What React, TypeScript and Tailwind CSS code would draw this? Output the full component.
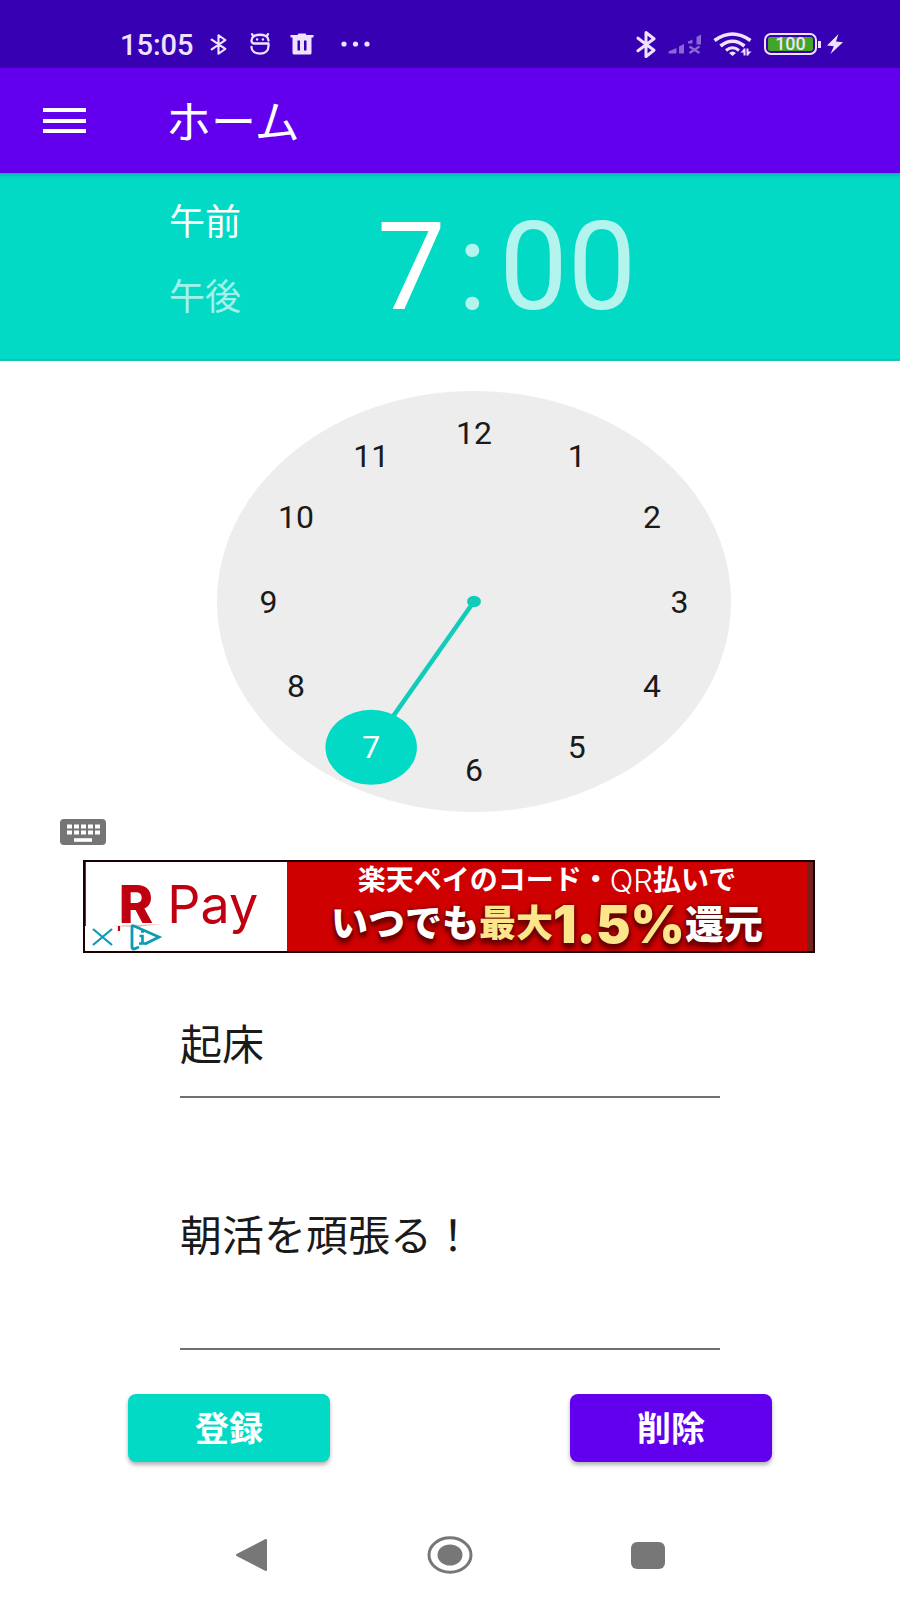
import { useState } from "react";

const HOURS = [12, 1, 2, 3, 4, 5, 6, 7, 8, 9, 10, 11];

// Place of an hour on the dial, in percent of the dial's box.
function place(hour: number) {
  const angle = (hour * Math.PI) / 6;
  return { x: 50 + 40 * Math.sin(angle), y: 50 - 40 * Math.cos(angle) };
}

function BluetoothIcon({ className, stroke }: { className: string; stroke: number }) {
  return (
    <svg className={className} viewBox="0 0 20 26" preserveAspectRatio="none" fill="none" stroke="currentColor" strokeWidth={stroke} strokeLinejoin="round" strokeLinecap="round" aria-hidden="true">
      <path d="M2 7 L18 18.5 L10 24.5 V1.5 L18 7.5 L2 19" />
    </svg>
  );
}

function StatusBar() {
  return (
    <div className="flex h-[68px] items-center justify-between bg-[#3700b3] pt-[20px] pr-[57px] pl-[120px] text-[#eee2ff]">
      <div className="flex items-center">
        <span className="w-[90px] pt-[2px] text-[29px] leading-[28px] font-medium">15:05</span>
        <BluetoothIcon className="h-[21px] w-[17px]" stroke={2.5} />
        <svg className="ml-[23px] h-[22px] w-[20px]" viewBox="0 0 20 22" fill="none" stroke="currentColor" strokeWidth="2.300" strokeLinecap="round" strokeLinejoin="round" aria-hidden="true">
          <path d="M18.500 7.500 C18.500 5.500 17.500 4 16 3 Q10 0.500 4 3 C2.500 4 1.500 5.500 1.500 7.500 Q1.500 10.500 4.500 10.500 H18.500 V13 C18.500 18 15 20.600 10 20.600 C5 20.600 1.500 18 1.500 14" />
          <path d="M3.500 3.500 L2 1.200 M16.500 3.500 L18 1.200" />
          <path d="M7 6.500 H7.200 M12.800 6.500 H13" />
        </svg>
        <svg className="ml-[20px] h-[22px] w-[24px]" viewBox="0 0 24 22" fill="currentColor" aria-hidden="true">
          <path fillRule="evenodd" d="M0.500 2 H7.500 L8.500 0.500 H15.500 L16.500 2 H23.500 V4.500 H21.500 V20 Q21.500 21.500 20 21.500 H4 Q2.500 21.500 2.500 20 V4.500 H0.500 Z M7.500 7.500 V17.500 H10 V7.500 Z M14 7.500 V17.500 H16.500 V7.500 Z" />
        </svg>
        <svg className="ml-[27px] h-[6px] w-[30px]" viewBox="0 0 30 6" fill="currentColor" aria-hidden="true">
          <circle cx="3" cy="3" r="2.600" />
          <circle cx="14.500" cy="3" r="2.600" />
          <circle cx="26" cy="3" r="2.600" />
        </svg>
      </div>
      <div className="flex items-center">
        <BluetoothIcon className="h-[27px] w-[20px]" stroke={3} />
        <svg className="ml-[12px] h-[20px] w-[34px] text-[#8a68d2]" viewBox="0 0 34 20" fill="currentColor" aria-hidden="true">
          <path d="M0.500 19.500 V17.500 L8.500 14 V19.500 Z M11 19.500 V12.500 L16 10 V19.500 Z M20 9.500 V7.500 L24.500 5.500 V9.500 Z M28.500 10.500 V3 L33 0.500 V10.500 Z" />
          <path d="M21.500 12.500 L31.500 19 M31.500 12.500 L21.500 19" stroke="currentColor" strokeWidth="2.400" />
        </svg>
        <svg className="ml-[11px] h-[24px] w-[40px]" viewBox="0 0 40 24" fill="none" stroke="currentColor" strokeWidth="3.600" aria-hidden="true">
          <path d="M1.500 8.500 Q19.500 -4.500 37.500 8.500" />
          <path d="M7.500 14 Q19.500 4.500 31.500 14" />
          <path d="M13 18.500 Q19.500 13 26 18.500" strokeWidth="3" />
          <path d="M16 21 Q19.500 18 23 21 L19.500 24 Z" fill="currentColor" stroke="none" />
          <path d="M31.500 23.500 V16.500 M34.500 16.500 V23.500" strokeWidth="2" />
          <path d="M27.500 20.500 L31.500 16.500 V20.500 Z M38.500 19.500 L34.500 23.500 V19.500 Z" fill="currentColor" stroke="none" />
        </svg>
        <div className="ml-[11px] flex items-center">
          <span className="flex h-[22px] w-[53px] rounded-[7px] border-2 border-current p-[2px]">
            <span className="flex w-full items-center justify-center rounded-[2px] bg-[#43a527] text-[18px] leading-[14px] font-medium">100</span>
          </span>
          <span className="ml-[1px] h-[7px] w-[3px] bg-current" />
        </div>
        <svg className="ml-[6px] h-[20px] w-[16px]" viewBox="0 0 16 20" fill="currentColor" aria-hidden="true">
          <path d="M11.500 0 L0 11.500 L6.800 12.300 L3.500 20 L16 8.300 L9 7.500 Z" />
        </svg>
      </div>
    </div>
  );
}

function AppBar() {
  return (
    <header className="flex h-[105px] items-center bg-[#6200ee] pl-[43px] text-white">
      <button type="button" aria-label="メニュー" className="flex h-[25px] w-[43px] flex-col justify-between">
        <span className="h-[4px] w-full bg-white" />
        <span className="h-[4px] w-full bg-white" />
        <span className="h-[4px] w-full bg-white" />
      </button>
      <h1 className="ml-[80px] pt-[6px] text-[45px] leading-[52px] font-normal">ホーム</h1>
    </header>
  );
}

function AdBanner() {
  return (
    <a href="#ad" className="relative mt-[15px] mr-[85px] ml-[83px] flex h-[93px] overflow-hidden border-2 border-[#1a0000] bg-[#cf0000]">
      <span className="ml-px flex w-[201px] shrink-0 items-baseline justify-center gap-[14px] bg-white pt-[13px] pl-[4px] font-[Inter,sans-serif] text-[52px] leading-[60px] text-[#bf0010]">
        <span className="font-extrabold">R</span>
        <span>Pay</span>
      </span>
      <span className="flex flex-1 flex-col items-center pt-px whitespace-nowrap text-white">
        <span className="flex text-[28px] leading-[36px] font-bold">
          楽天ペイのコード・
          <span className="font-[Inter,sans-serif] text-[31px] font-light">QR</span>
          払いで
        </span>
        <span className="flex leading-[52px] font-black [text-shadow:0_0_4px_#6b0000,0_3px_4px_#6b0000,0_5px_5px_#6b0000]">
          <span className="text-[37px]">いつでも</span>
          <span className="text-[37px] text-[#fbe68c]">最大</span>
          <span className="font-[Inter,sans-serif] text-[52px] text-[#fbe68c]">1.5%</span>
          <span className="text-[39px]">還元</span>
        </span>
      </span>
      <span className="w-[6px] bg-[#74201c]" />
      <svg className="absolute bottom-0 left-0 h-[28px] w-[80px]" viewBox="0 0 80 28" fill="none" stroke="#0c9bb0" strokeWidth="2.200" aria-hidden="true">
        <path d="M0 3 H28 L80 1 V28 H0 Z" fill="#fff" stroke="none" />
        <path d="M26 3 L78 1 L50 4 Z" fill="#eeb2b2" stroke="none" />
        <path d="M34 3 V8" stroke="#bf0010" />
        <path d="M8 6 L27 22 M27 6 L8 22" />
        <path d="M54 24 L49 26 Q47 26 47 24 V4 Q47 2 49 3 L74 14 L60 21" strokeWidth="2.800" />
        <path d="M54.500 13 H57.500 V20.500 M54 20.500 H61 M56 8.500 H59" strokeWidth="2.600" />
      </svg>
    </a>
  );
}

export default function App() {
  const [hour, setHour] = useState(7);
  const knob = place(hour);

  return (
    <div lang="ja" className="flex min-h-screen flex-col bg-white font-[Roboto,'Noto_Sans_CJK_JP',sans-serif] text-[#1a1a1a]">
      <StatusBar />
      <AppBar />

      <section className="flex h-[188px] border-b-2 border-[#16c2b2] bg-[#03dac5] pl-[169px] text-white shadow-[inset_0_6px_4px_-4px_rgba(0,90,90,0.3)]">
        <div className="flex flex-col gap-[27px] pt-[26px] text-[36px] leading-[48px]">
          <button type="button">午前</button>
          <button type="button" className="text-[#a3f2ea]">午後</button>
        </div>
        <div className="flex items-start gap-[12px] pt-[31px] pl-[136px] text-[122px] leading-[128px]">
          <span>7</span>
          <span className="text-[#b3f4ee]">:</span>
          <span className="text-[#b3f4ee]">00</span>
        </div>
      </section>

      <main>
        <div className="flex justify-center pt-[30px] pl-[48px]">
          <div className="relative h-[421px] w-[514px] rounded-[50%] bg-[#ededed]">
            <svg className="absolute inset-0 size-full" viewBox="0 0 100 100" preserveAspectRatio="none" aria-hidden="true">
              <line x1="50" y1="50" x2={knob.x} y2={knob.y} stroke="#10ccb9" strokeWidth="4.500" vectorEffect="non-scaling-stroke" />
              <circle cx="50" cy="50" r="1.350" fill="#10ccb9" />
              <circle cx={knob.x} cy={knob.y} r="8.900" fill="#03dac5" />
            </svg>
            {HOURS.map((h) => {
              const p = place(h);
              return (
                <button
                  key={h}
                  type="button"
                  onClick={() => setHour(h)}
                  style={{ left: `${p.x}%`, top: `${p.y}%` }}
                  className={`absolute h-[40px] w-[60px] -translate-1/2 text-[32px] leading-[40px] ${h === hour ? "text-white" : ""}`}
                >
                  {h}
                </button>
              );
            })}
          </div>
        </div>

        <button type="button" aria-label="キーボード入力" className="mt-[7px] ml-[60px] block h-[26px] w-[46px]">
          <svg className="size-full" viewBox="0 0 46 26" aria-hidden="true">
            <rect width="46" height="26" rx="4" fill="#757575" />
            <path d="M7 7.500 H40 M7 13.500 H40" stroke="#fff" strokeWidth="4" strokeDasharray="5 2" />
            <path d="M14 21 H32" stroke="#fff" strokeWidth="3.600" />
          </svg>
        </button>

        <AdBanner />

        <form onSubmit={(e) => e.preventDefault()}>
          <div className="mx-[20%] flex flex-col text-[42px]">
            <input aria-label="タイトル" defaultValue="起床" className="mt-[57px] h-[88px] border-b-2 border-[#707070] pb-[24px] outline-none" />
            <textarea aria-label="メモ" defaultValue="朝活を頑張る！" className="mt-[108px] h-[144px] resize-none overflow-hidden border-b-2 border-[#707070] leading-[62px] outline-none" />
          </div>
          <div className="mt-[44px] flex justify-between px-[128px] text-[34px] font-bold text-white">
            <button type="submit" className="h-[68px] w-[202px] rounded-[8px] bg-[#03dac5] pt-[2px] shadow-[0_3px_4px_rgba(0,0,0,0.3)]">登録</button>
            <button type="button" className="h-[68px] w-[202px] rounded-[8px] bg-[#6200ee] pt-[2px] shadow-[0_3px_4px_rgba(0,0,0,0.3)]">削除</button>
          </div>
        </form>
      </main>

      <nav className="mt-[48px] grid h-[90px] grid-cols-3 items-center px-[17%] text-[#777777]">
        <button type="button" aria-label="戻る" className="flex justify-center">
          <svg className="h-[34px] w-[34px]" viewBox="0 0 34 34" fill="currentColor" stroke="currentColor" strokeWidth="2" strokeLinejoin="round" aria-hidden="true">
            <path d="M2 17 L31 2 V32 Z" />
          </svg>
        </button>
        <button type="button" aria-label="ホーム画面" className="flex justify-center">
          <svg className="h-[38px] w-[46px]" viewBox="0 0 46 38" aria-hidden="true">
            <ellipse cx="23" cy="19" rx="21" ry="17.200" fill="none" stroke="currentColor" strokeWidth="3" />
            <ellipse cx="23" cy="19" rx="12.500" ry="10.500" fill="currentColor" />
          </svg>
        </button>
        <button type="button" aria-label="アプリ履歴" className="flex justify-center">
          <span className="h-[27px] w-[34px] rounded-[6px] bg-current" />
        </button>
      </nav>
    </div>
  );
}
